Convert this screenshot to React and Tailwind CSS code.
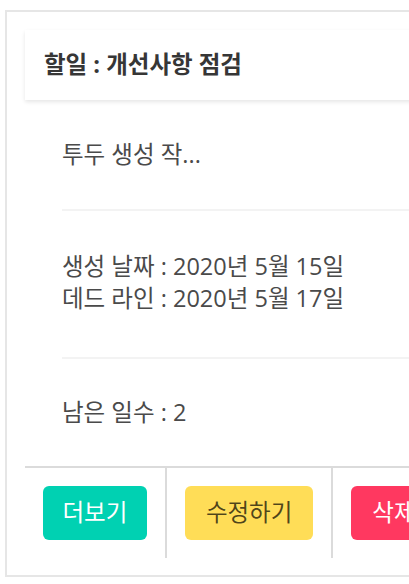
import React from 'react';

const todo = {
  title: '개선사항 점검',
  summary: '투두 생성 작...',
  createdAt: '2020년 5월 15일',
  deadline: '2020년 5월 17일',
  daysLeft: 2,
};

const App = () => {
  return (
    <div className="min-h-[584px] w-[409px] overflow-hidden bg-white pt-[10px] pl-[5px] font-['Open_Sans','Noto_Sans_CJK_KR',sans-serif]">
      <div className="w-[600px] border-t-2 border-b-2 border-l-2 border-[#e6e6e6] pt-[18px] pb-[17px] pl-[18px]">
        <div className="bg-white">
          <header className="flex h-[70px] items-center bg-white pl-[19px] shadow-[0_2px_4px_rgba(10,10,10,0.1)]">
            <p className="text-[23.5px] font-bold text-[#363636]">할일 : {todo.title}</p>
          </header>

          <div className="pl-[37px] text-[23.5px] leading-[32px] text-[#4a4a4a]">
            <div className="pt-[38px] pb-[39px]">{todo.summary}</div>
            <hr className="h-[2px] border-0 bg-[#f3f3f3]" />
            <div className="pt-[39px] pb-[43px]">
              <p>생성 날짜 : {todo.createdAt}</p>
              <p>데드 라인 : {todo.deadline}</p>
            </div>
            <hr className="h-[2px] border-0 bg-[#f3f3f3]" />
            <div className="pt-[37px] pb-[38px]">
              <p>남은 일수 : {todo.daysLeft}</p>
            </div>
          </div>

          <footer className="flex border-t-2 border-[#dbdbdb]">
            <div className="flex items-center px-[18px] py-[18px]">
              <button className="h-[54px] rounded-[6px] bg-[#00d1b2] px-[19.5px] text-[23.5px] text-white">더보기</button>
            </div>
            <div className="flex items-center border-l-2 border-[#dbdbdb] px-[18px] py-[18px]">
              <button className="h-[54px] rounded-[6px] bg-[#ffdd57] px-[21px] text-[23.5px] text-[rgba(0,0,0,0.7)]">수정하기</button>
            </div>
            <div className="flex items-center border-l-2 border-[#dbdbdb] px-[18px] py-[18px]">
              <button className="h-[54px] rounded-[6px] bg-[#ff3860] px-[21px] text-[23.5px] text-white">삭제하기</button>
            </div>
          </footer>
        </div>
      </div>
    </div>
  );
};

export default App;
